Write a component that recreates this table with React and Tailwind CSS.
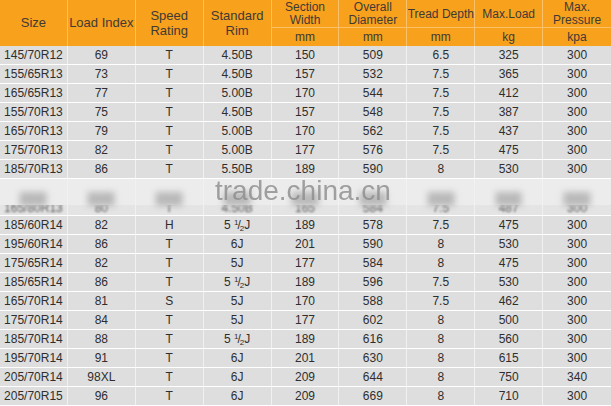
import React from "react";

const rowsTop = [
  ["145/70R12", "69", "T", "4.50B", "150", "509", "6.5", "325", "300"],
  ["155/65R13", "73", "T", "4.50B", "157", "532", "7.5", "365", "300"],
  ["165/65R13", "77", "T", "5.00B", "170", "544", "7.5", "412", "300"],
  ["155/70R13", "75", "T", "4.50B", "157", "548", "7.5", "387", "300"],
  ["165/70R13", "79", "T", "5.00B", "170", "562", "7.5", "437", "300"],
  ["175/70R13", "82", "T", "5.00B", "177", "576", "7.5", "475", "300"],
  ["185/70R13", "86", "T", "5.50B", "189", "590", "8", "530", "300"],
];

const hiddenRow = ["165/80R13", "80", "T", "4.50B", "165", "584", "7.5", "487", "300"];

// "half" marks the 5 1/2 J rim
const rowsBottom = [
  ["185/60R14", "82", "H", "half", "189", "578", "7.5", "475", "300"],
  ["195/60R14", "86", "T", "6J", "201", "590", "8", "530", "300"],
  ["175/65R14", "82", "T", "5J", "177", "584", "8", "475", "300"],
  ["185/65R14", "86", "T", "half", "189", "596", "7.5", "530", "300"],
  ["165/70R14", "81", "S", "5J", "170", "588", "7.5", "462", "300"],
  ["175/70R14", "84", "T", "5J", "177", "602", "8", "500", "300"],
  ["185/70R14", "88", "T", "half", "189", "616", "8", "560", "300"],
  ["195/70R14", "91", "T", "6J", "201", "630", "8", "615", "300"],
  ["205/70R14", "98XL", "T", "6J", "209", "644", "8", "750", "340"],
  ["205/70R15", "96", "T", "6J", "209", "669", "8", "710", "300"],
];

const Half = () => (
  <span>
    5 <span className="relative -top-[4px] text-[8px]">1</span>
    <span className="-ml-[1px]">/</span>
    <span className="relative top-[2px] -ml-[1px] text-[8px]">2</span>J
  </span>
);

const Row = ({ cells }) => (
  <div className="grid h-[19px] grid-cols-9 border-b border-white bg-[#dedede]">
    {cells.map((c, i) => (
      <div
        key={i}
        className="flex items-center justify-center border-r border-[#f1f1f1] text-[12px] text-[#2e2e2e] last:border-r-0"
      >
        {c === "half" ? <Half /> : c}
      </div>
    ))}
  </div>
);

const hb = "border-[#fbc06a]";

const App = () => {
  return (
    <div className="relative h-[406px] w-[611px] overflow-hidden bg-white font-['Liberation_Sans',Arial,sans-serif]">
      {/* header */}
      <div className="grid h-[46px] grid-cols-9 grid-rows-[28px_18px] bg-[#f8a11d] text-[#403a35]">
        <div className={`row-span-2 flex items-center justify-center border-r ${hb} text-[13px]`}>
          Size
        </div>
        <div className={`row-span-2 flex items-center justify-center border-r ${hb} text-[13px]`}>
          Load Index
        </div>
        <div className={`row-span-2 flex items-center justify-center border-r ${hb} text-center text-[13px] leading-[15px]`}>
          Speed
          <br />
          Rating
        </div>
        <div className={`row-span-2 flex items-center justify-center border-r ${hb} text-center text-[13px] leading-[15px]`}>
          Standard
          <br />
          Rim
        </div>
        <div className={`flex items-center justify-center border-r border-b ${hb} text-center text-[12px] leading-[13px]`}>
          Section
          <br />
          Width
        </div>
        <div className={`flex items-center justify-center border-r border-b ${hb} text-center text-[12px] leading-[13px]`}>
          Overall
          <br />
          Diameter
        </div>
        <div className={`flex items-center justify-center border-r border-b ${hb} text-[12px]`}>
          Tread Depth
        </div>
        <div className={`flex items-center justify-center border-r border-b ${hb} text-[12px]`}>
          Max.Load
        </div>
        <div className={`flex items-center justify-center border-b ${hb} text-center text-[12px] leading-[13px]`}>
          Max.
          <br />
          Pressure
        </div>
        {["mm", "mm", "mm", "kg", "kpa"].map((u, i) => (
          <div
            key={i}
            className={`flex items-center justify-center border-r ${hb} text-[12px] last:border-r-0`}
          >
            {u}
          </div>
        ))}
      </div>

      {rowsTop.map((r) => (
        <Row key={r[0]} cells={r} />
      ))}

      {/* row hidden under the watermark */}
      <div className="grid h-[37px] grid-cols-9 border-b border-white bg-[#e4e4e4]">
        {hiddenRow.map((c, i) => (
          <div
            key={i}
            className="relative flex items-end justify-center border-r border-[#f1f1f1] pb-[1px] last:border-r-0"
          >
            <span className="text-[12px] leading-[12px] text-[#555] blur-[0.8px]">{c}</span>
            <div className="absolute inset-x-0 top-0 h-[26px] bg-[#ececec]" />
            <div className="absolute left-1/2 top-[13px] h-[14px] w-[40%] -translate-x-1/2 bg-[#b9b9b9] blur-[3px]" />
          </div>
        ))}
      </div>

      {rowsBottom.map((r) => (
        <Row key={r[0]} cells={r} />
      ))}

      <div className="pointer-events-none absolute left-[215px] top-[180px] text-[28px] leading-[21px] text-[#8c8c8c] opacity-80">
        trade.china.cn
      </div>
    </div>
  );
};

export default App;
